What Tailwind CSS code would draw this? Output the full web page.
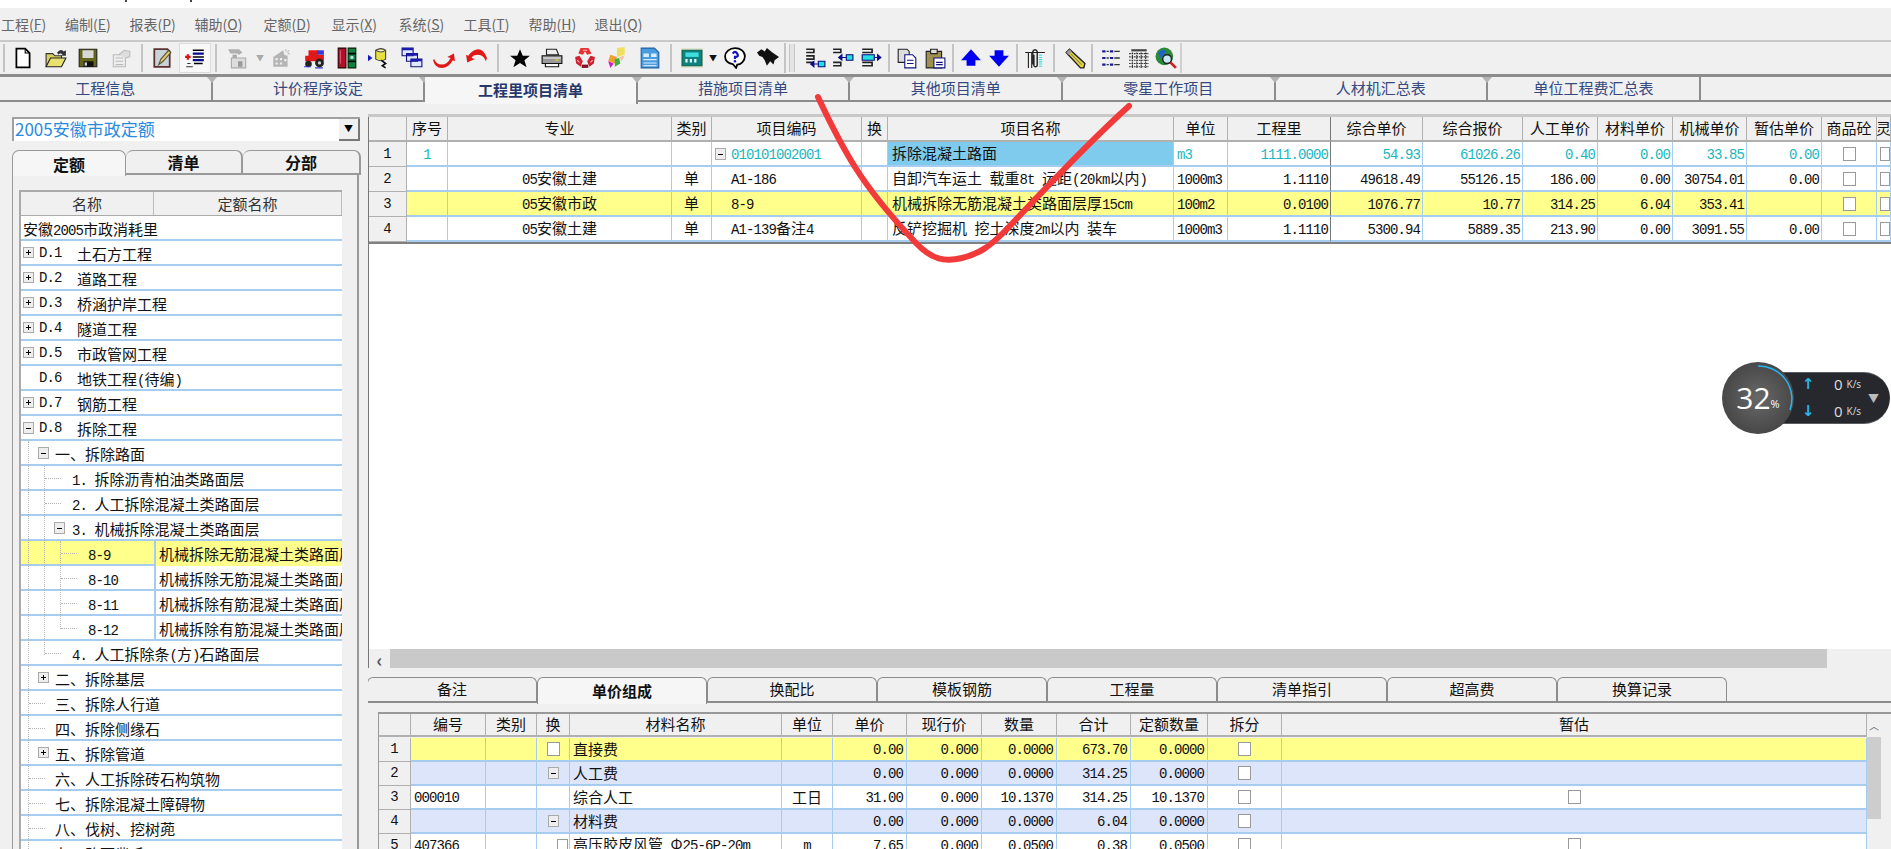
<!DOCTYPE html>
<html lang="zh-CN">
<head>
  <meta charset="UTF-8" />
  <title>工程量项目清单</title>
  <script src="https://cdn.jsdelivr.net/npm/@tailwindcss/browser@4"></script>
</head>
<body class="relative w-[1891px] h-[849px] overflow-hidden bg-[#f0f0f0] text-[15px] text-[#111] font-['Noto_Sans_CJK_SC','Liberation_Sans',sans-serif]">

  <div class="h-[8px] bg-white"></div>
  <i class="absolute left-[125px] top-0 w-[2px] h-[2px] bg-[#444]"></i>
  <i class="absolute left-[190px] top-0 w-[2px] h-[2px] bg-[#444]"></i>

  <!-- Menu -->
  <nav class="h-[32px] flex items-center pl-[1px] text-[14px] text-[#666]">
    <span class="w-[64px]">工程(<u>F</u>)</span>
    <span class="w-[64.5px]">编制(<u>E</u>)</span>
    <span class="w-[65px]">报表(<u>P</u>)</span>
    <span class="w-[69px]">辅助(<u>O</u>)</span>
    <span class="w-[68px]">定额(<u>D</u>)</span>
    <span class="w-[67px]">显示(<u>X</u>)</span>
    <span class="w-[65px]">系统(<u>S</u>)</span>
    <span class="w-[65px]">工具(<u>T</u>)</span>
    <span class="w-[66px]">帮助(<u>H</u>)</span>
    <span>退出(<u>Q</u>)</span>
  </nav>

  <!-- Toolbar -->
  <div class="h-[34px] border-t-2 border-[#c9c9c9] flex items-center [&>span]:flex [&>span]:items-center [&>span]:justify-center [&>span]:h-[30px] [&_svg]:w-[22px] [&_svg]:h-[22px]">
    <span class="w-[7px]"><i class="w-[2px] h-[28px] bg-[#c4c4c4]"></i></span>
    <span class="w-[32.5px]"><svg viewBox="0 0 20 20"><path d="M4 1.500h8l4 4v13H4z" fill="#fff" stroke="#000" stroke-width="1.600"/><path d="M12 1.500v4h4" fill="none" stroke="#000"/></svg></span>
    <span class="w-[32.5px]"><svg viewBox="0 0 20 20"><path d="M1 18V6h6l2 2h6v3" fill="#d8d060" stroke="#333"/><path d="M1 18l4-8h14l-4 8z" fill="#e8e070" stroke="#222"/><path d="M11 5q3-4 6-1l2-1v5h-5l2-1q-2-2-4 0z" fill="#333"/></svg></span>
    <span class="w-[32.5px]"><svg viewBox="0 0 20 20"><path d="M2 2h16v16H2z" fill="#66661a" stroke="#222"/><path d="M5 3h10v7H5z" fill="#d8d8d8"/><path d="M6 13h9v5H6z" fill="#111"/><path d="M7 14h2v3H7z" fill="#ddd"/></svg></span>
    <span class="w-[32.5px]"><svg viewBox="0 0 20 20"><path d="M3 7h11v11H3z" fill="#eee" stroke="#bbb"/><path d="M5 10h7M5 13h7M5 16h7" stroke="#bbb"/><path d="M8 7l5-4 5 1v5l-4 1" fill="#ddd" stroke="#bbb"/></svg></span>
    <span class="w-[9px]"><i class="w-[2px] h-[28px] bg-[#c4c4c4]"></i></span>
    <span class="w-[32.5px]"><svg viewBox="0 0 20 20"><path d="M3 2h12l2 2v14H3z" fill="#c8d4d8" stroke="#5a3030" stroke-width="1.600"/><path d="M7 16l2-5 7-8 2 2-7 8z" fill="#e8c870" stroke="#553"/></svg></span>
    <span class="w-[32.5px] bg-[#f8f8f8] border border-[#dcdcdc]"><svg viewBox="0 0 20 20"><path d="M8 3h10M8 9h10M9 15h8" stroke="#000" stroke-width="1.400"/><path d="M8 6h10M8 12h10" stroke="#0a0a90" stroke-width="2"/><path d="M1 9h5M3.500 6.500v5" stroke="#e01010" stroke-width="2"/><path d="M3 15h3M2 18h6" stroke="#333"/></svg></span>
    <span class="w-[9px]"><i class="w-[2px] h-[28px] bg-[#c4c4c4]"></i></span>
    <span class="w-[36px]"><svg viewBox="0 0 20 20"><path d="M1 2h10l3 3-3 2-2-1H6L3 6z" fill="#b0b0b0"/><path d="M5 7h4v3H5z" fill="#aaa"/><path d="M4 10h13v9H4z" fill="#ddd" stroke="#aaa"/><path d="M10 13h4v5h-4z" fill="#999"/></svg></span>
    <span class="w-[8px] text-[8px] text-[#aaa]">▼</span>
    <span class="w-[34px]"><svg viewBox="0 0 20 20"><path d="M3 9l9-6 1 4 3 1v10H3z" fill="#b4b4b4"/><path d="M5 10h2v2H5zM9 10h2v2H9zM5 14h2v2H5zM9 14h2v2H9zM13 11h2v2h-2z" fill="#eee"/><path d="M14 2l1 2M17 3l-1 2M18 6h-2" stroke="#bbb"/></svg></span>
    <span class="w-[32.5px]"><svg viewBox="0 0 20 20"><path d="M5 3h9v4h5v6H2V8h3z" fill="#e01818"/><path d="M13 3h6v4h-6z" fill="#3838d8"/><circle cx="5" cy="15.500" r="3" fill="#222"/><circle cx="15" cy="14.500" r="4" fill="#222"/><circle cx="15" cy="14.500" r="1.500" fill="#ccc"/><path d="M1 18h6M11 19h7" stroke="#3030d0"/></svg></span>
    <span class="w-[32.5px]"><svg viewBox="0 0 20 20"><path d="M2 1h7v18H2z" fill="#b01028" stroke="#200"/><path d="M4 3v12" stroke="#f05070"/><path d="M11 1h7v18h-7z" fill="#108040" stroke="#020"/><path d="M11 6h7M11 13h7" stroke="#000" stroke-width="1.500"/><circle cx="14.500" cy="9.500" r="1.500" fill="#bde"/></svg></span>
    <span class="w-[32px]"><svg viewBox="0 0 20 20"><path d="M0 7l4 3-4 3z" fill="#1818c0"/><path d="M7 3q5-3 9 0v8q-4 3-9 0z" fill="#e8e040" stroke="#444"/><path d="M7 3q5 3 9 0" fill="#fff" stroke="#444"/><path d="M12 12l4 3-3 2 3 2" fill="none" stroke="#111" stroke-width="1.500"/></svg></span>
    <span class="w-[33px]"><svg viewBox="0 0 20 20"><path d="M1 1h10v7H1zM5 6h10v7H5zM9 11h10v7H9z" fill="#e0e8ff" stroke="#101080"/><path d="M1 1h10v2H1zM5 6h10v2H5zM9 11h10v2H9z" fill="#1a1ab0"/></svg></span>
    <span class="w-[32px]"><svg viewBox="0 0 20 20"><path d="M1 11q2 5 7 5t8-6l-3-1 6-3 1 7-2-1q-4 7-10 7t-8-7z" fill="#e01818"/></svg></span>
    <span class="w-[32.5px]"><svg viewBox="0 0 20 20"><path d="M19 13q-2-6-7-6t-6 3l3 1-7 3-1-7 2 1q4-6 9-6t8 8z" fill="#e01818"/></svg></span>
    <span class="w-[11px]"><i class="w-[2px] h-[28px] bg-[#c4c4c4]"></i></span>
    <span class="w-[32.5px]"><svg viewBox="0 0 20 20"><path d="M10 2l2.500 6H19l-5 4 2 6.500-6-4-6 4L6 12 1 8h6.500z" fill="#000"/></svg></span>
    <span class="w-[32.5px]"><svg viewBox="0 0 20 20"><path d="M5 2h9l2 5H5z" fill="#eee" stroke="#222"/><path d="M1 8h18v7H1z" fill="#999" stroke="#111"/><path d="M2 10h16" stroke="#eee"/><path d="M4 15h12v3H4z" fill="#fff" stroke="#111"/><path d="M13 12h3" stroke="#dd0"/></svg></span>
    <span class="w-[32.5px]"><svg viewBox="0 0 20 20"><path d="M6 1h7l3 5-4 1-2-3-2 3-4-1z" fill="#e83030"/><path d="M1 9l4-1 3 5-2 5-4-3zM19 9l-4-1-3 5 2 5 4-3z" fill="#d02030"/><path d="M7 16h6v3H7z" fill="#801020"/><path d="M8 3h4M3 12l2 2M17 12l-2 2" stroke="#fbb"/></svg></span>
    <span class="w-[32.5px]"><svg viewBox="0 0 20 20"><path d="M10 1l7-1v7l-7 2z" fill="#f0e060"/><path d="M4 7l6 2-2 6-6-2z" fill="#f0a030"/><path d="M8 11l4-1 1 5-5 3z" fill="#40b040"/><path d="M12 9l5-1-3 5z" fill="#f8c0a0"/><path d="M2 13l5 2-3 4z" fill="#d020c0"/></svg></span>
    <span class="w-[32.5px]"><svg viewBox="0 0 20 20"><path d="M2 1h12l4 4v14H2z" fill="#4a9ce0" stroke="#2060a0"/><path d="M4 6h5v3H4zM11 6h5v3h-5zM4 11h12v1H4zM4 14h12v1H4z" fill="#d8ecff"/><path d="M4 17h12" stroke="#eef"/></svg></span>
    <span class="w-[9px]"><i class="w-[2px] h-[28px] bg-[#c4c4c4]"></i></span>
    <span class="w-[34px]"><svg viewBox="0 0 20 20"><path d="M0 1h20v18H0z" fill="#e0e0d0"/><path d="M1 3h18v14H1z" fill="#108080" stroke="#064"/><path d="M4 5h12v4H4z" fill="#40e0e0"/><path d="M4 11h2v3H4zM8 11h2v3H8zM12 11h2v3h-2z" fill="#dff"/></svg></span>
    <span class="w-[8px] text-[8px] text-[#111]">▼</span>
    <span class="w-[35px]"><svg viewBox="0 0 20 20"><path d="M10 1c5 0 9 3 9 7.500S15 16 12 16l-1 3-3-3.500C4 15 1 12.500 1 8.500S5 1 10 1z" fill="#fff" stroke="#000" stroke-width="1.600"/><path d="M8 6q2-3 4 0t-2 3v2" fill="none" stroke="#1010c0" stroke-width="2"/><circle cx="10" cy="13" r="1.100" fill="#1010c0"/></svg></span>
    <span class="w-[32px]"><svg viewBox="0 0 20 20"><path d="M0 5l4-3 3 2 2-3 5 4 6 4-4 3-1 4-3-3-3 4-2-5-2-3-3-1z" fill="#111"/></svg></span>
    <span class="w-[2px] h-[30px] bg-[#c4c4c4]"></span>
    <span class="w-[11px]"><i class="w-[6px] h-[28px] border-x border-[#c4c4c4] bg-[#e4e4e4]"></i></span>
    <span class="w-[4px]"></span>
    <span class="w-[28px]"><svg viewBox="0 0 20 20"><path d="M2 2h7v3H2M2 8h7v3H2M2 14h7" fill="none" stroke="#222" stroke-width="1.500"/><path d="M13 13h6v5h-6z" fill="#20e0e0" stroke="#0a0a80"/><path d="M13 15.500H7M9 13l-3 2.500 3 2.500z" fill="#0a0a90" stroke="#0a0a90"/></svg></span>
    <span class="w-[28px]"><svg viewBox="0 0 20 20"><path d="M1 2h7v3H1M1 14h7v3H1" fill="none" stroke="#222" stroke-width="1.500"/><path d="M13 7h6v5h-6z" fill="#20e0e0" stroke="#0a0a80"/><path d="M13 9.500H7M9 7L6 9.500 9 12z" fill="#0a0a90" stroke="#0a0a90"/></svg></span>
    <span class="w-[28px]"><svg viewBox="0 0 20 20"><path d="M2 2h9v3H2M2 14h9v3H2" fill="none" stroke="#222" stroke-width="1.500"/><path d="M2 7h11v5H2z" fill="#20e0e0" stroke="#0a0a80"/><path d="M13 9.500h6M16 7l3 2.500-3 2.500z" fill="#0a0a90" stroke="#0a0a90"/></svg></span>
    <span class="w-[8px]"><i class="w-[2px] h-[28px] bg-[#c4c4c4]"></i></span>
    <span class="w-[28px]"><svg viewBox="0 0 20 20"><path d="M2 2h8l2 2v10H2z" fill="#ddd" stroke="#222"/><path d="M8 7h7l3 3v9H8z" fill="#fff" stroke="#101080"/><path d="M10 12h6M10 15h6" stroke="#101080"/></svg></span>
    <span class="w-[28px]"><svg viewBox="0 0 20 20"><path d="M2 4h14v15H2z" fill="#a09050" stroke="#222"/><path d="M6 2h6v4H6z" fill="#ddd" stroke="#222"/><path d="M9 10h10v9H9z" fill="#fff" stroke="#101080"/><path d="M11 14h6M11 16h6" stroke="#101080"/></svg></span>
    <span class="w-[8px]"><i class="w-[2px] h-[28px] bg-[#c4c4c4]"></i></span>
    <span class="w-[28px]"><svg viewBox="0 0 20 20"><path d="M10 2l9 10h-5v5H6v-5H1z" fill="#0000f0"/></svg></span>
    <span class="w-[28px]"><svg viewBox="0 0 20 20"><path d="M10 18L1 8h5V3h8v5h5z" fill="#0000f0"/></svg></span>
    <span class="w-[8px]"><i class="w-[2px] h-[28px] bg-[#c4c4c4]"></i></span>
    <span class="w-[28px]"><svg viewBox="0 0 20 20"><path d="M1 5h18M4 5v14M7 5v14" stroke="#222" fill="none"/><path d="M15 7v12" stroke="#30e0e0" stroke-dasharray="1 1" stroke-width="3"/><path d="M8 16V4q2-3 4 0v13q-2 2-3 0V7" fill="none" stroke="#222" stroke-width="1.300"/></svg></span>
    <span class="w-[9px]"><i class="w-[2px] h-[28px] bg-[#c4c4c4]"></i></span>
    <span class="w-[3px]"></span>
    <span class="w-[28px]"><svg viewBox="0 0 20 20"><path d="M2 5l3-3 14 13-1 4-3 0z" fill="#e8d838" stroke="#222" stroke-width="1.300"/><path d="M2 5l3-3 2 2-3 3z" fill="#999"/><path d="M6 6l10 10" stroke="#887"/></svg></span>
    <span class="w-[6px]"><i class="w-[2px] h-[28px] bg-[#c4c4c4]"></i></span>
    <span class="w-[2px]"></span>
    <span class="w-[28px]"><svg viewBox="0 0 20 20"><path d="M2 3h3v2H2zM2 9h3v2H2zM2 15h3v2H2zM9 3h3v2H9zM9 9h3v2H9zM9 15h3v2H9z" fill="#1a1aa0"/><path d="M6 4h2M6 10h2M6 16h2M13 4h5M13 10h5M13 16h5" stroke="#333" stroke-width="1.300"/></svg></span>
    <span class="w-[27px]"><svg viewBox="0 0 20 20"><path d="M3 2h14v2H3z" fill="#444"/><path d="M1 6h18M1 9h18M1 12h18M1 15h18M1 18h18M4 5v14M8 5v14M12 5v14M16 5v14" stroke="#333" stroke-dasharray="1.500 .7"/></svg></span>
    <span class="w-[28px]"><svg viewBox="0 0 20 20"><circle cx="8.500" cy="8.500" r="8" fill="#2a8a3a"/><path d="M3 5q4-4 7-1l-2 3-3 3zM12 12l4-2-2 5z" fill="#2060d0"/><circle cx="11" cy="11" r="4" fill="#c8e8f8" stroke="#222" stroke-width="1.300"/><path d="M14 14l5 5" stroke="#d02020" stroke-width="2.500"/></svg></span>
    <span class="w-[2px] h-[30px] bg-[#d0d0d0]"></span>
  </div>

  <div class="h-[3px] bg-[#8c8c8c]"></div>

  <!-- Page tabs -->
  <div class="h-[25px] flex border-b-2 border-[#8c8c8c] text-[#34497f] [&>div]:w-[212.6px] [&>div]:border-r-2 [&>div]:border-[#8c8c8c] [&>div]:flex [&>div]:items-center [&>div]:justify-center [&>div]:relative [&_i]:absolute [&_i]:-right-[6px] [&_i]:top-0 [&_i]:border-x-[5px] [&_i]:border-t-[6px] [&_i]:border-x-transparent [&_i]:border-t-[#b4b4b4]">
    <div>工程信息<i></i></div>
    <div>计价程序设定<i></i></div>
    <div class="h-[27px] font-bold bg-[#f6f6f6] text-[#26386b]">工程里项目清单<i></i></div>
    <div>措施项目清单<i></i></div>
    <div>其他项目清单<i></i></div>
    <div>零星工作项目<i></i></div>
    <div>人材机汇总表<i></i></div>
    <div>单位工程费汇总表</div>
  </div>

  <div class="flex h-[748px]">
    <!-- Left panel -->
    <aside class="w-[368px] shrink-0 pl-[12px] pt-[15px] overflow-hidden">
      <div class="w-[348px] h-[24px] flex bg-white border-t-2 border-l-2 border-[#a0a0a0]">
        <div class="flex-1 pl-[1px] text-[17px] leading-[20px] text-[#2a8ae0]">2005安徽市政定额</div>
        <div class="w-[21px] flex items-center justify-center bg-[#f0f0f0] border-r-2 border-b-2 border-[#777] text-[9px] text-black">▼</div>
      </div>
      <div class="mt-[9px] w-[349px] h-[25px] flex font-bold text-[16px]">
        <div class="w-[114px] h-[26px] flex items-center justify-center bg-[#f6f6f6] border-t border-x border-[#999] rounded-t-[7px]">定额</div>
        <div class="w-[117px] flex items-center justify-center border-t border-r-2 border-b-2 border-[#999] rounded-t-[7px]">清单</div>
        <div class="w-[118px] flex items-center justify-center border-t border-r-2 border-b-2 border-[#999] rounded-t-[7px]">分部</div>
      </div>
      <div class="w-[347px] h-[700px] border-l border-r-2 border-[#999] pl-[6px] pt-[15px]">
        <div class="w-[323px] border-t-2 border-l-2 border-[#aaa]">
          <div class="h-[24px] flex text-[#333] bg-[#f0f0f0] border-b border-[#aaa]">
            <div class="w-[133px] text-center leading-[24px] border-r border-[#bbb]">名称</div>
            <div class="flex-1 text-center leading-[24px] border-r border-[#bbb]">定额名称</div>
          </div>
          <div id="tree" class="relative bg-white"></div>
        </div>
      </div>
    </aside>

    <!-- Right side -->
    <main class="flex-1 min-w-0 pt-[12px] overflow-hidden">
      <div class="border-t-[3px] border-[#c8c8c8]">
        <div class="border-l border-[#777] bg-white">
          <div id="topGrid" class="grid grid-cols-[38px_41px_224px_40px_150px_26px_286px_54px_103px_92px_100px_75px_75px_74px_75px_55px_14px] auto-rows-[25px]"></div>
          <div class="h-[2px] bg-[#808080]"></div>
          <div class="h-[405px]"></div>
          <div class="h-[19px] flex bg-[#f0f0f0]">
            <div class="w-[21px] flex items-center justify-center text-[18px] leading-none text-[#555] font-bold">‹</div>
            <div class="w-[1437px] bg-[#c9c9c9]"></div>
          </div>
        </div>
      </div>

      <!-- Lower tabs -->
      <div class="mt-[9px] -ml-[1px] h-[26px] flex border-b-2 border-[#8c8c8c] [&>div]:w-[170px] [&>div]:flex [&>div]:items-center [&>div]:justify-center [&>div]:border-t [&>div]:border-x [&>div]:border-[#8c8c8c] [&>div]:rounded-t-[6px]">
        <div>备注</div>
        <div class="h-[27px] font-bold bg-[#f6f6f6]">单价组成</div>
        <div>换配比</div>
        <div>模板钢筋</div>
        <div>工程量</div>
        <div>清单指引</div>
        <div>超高费</div>
        <div>换算记录</div>
      </div>

      <!-- Lower grid -->
      <div class="mt-[9px] ml-[10px] w-[1513px] flex border-t-2 border-l border-[#999]">
        <div id="bottomGrid" class="grid grid-cols-[32px_75px_51px_33px_212px_51px_74px_75px_75px_74px_77px_74px_585px] auto-rows-[24px] w-[1488px]"></div>
        <div class="w-[14px] flex flex-col">
          <div class="h-[23px] flex items-center justify-center text-[10px] text-[#555]">︿</div>
          <div class="h-[82px] bg-[#cdcdcd]"></div>
        </div>
      </div>
    </main>
  </div>

  <!-- Network speed widget -->
  <div class="absolute left-[1722px] top-[362px] w-[168px] h-[72px] flex items-center">
    <div class="absolute left-[36px] top-[10px] w-[132px] h-[52px] rounded-r-[26px] bg-[#26282d] border-y border-[#aaa]/40"></div>
    <div class="relative w-[72px] h-[72px] rounded-full bg-[radial-gradient(circle,#686868,#3a3a3a)] flex items-center justify-center text-white font-['Open_Sans',sans-serif]">
      <span class="text-[30px] leading-none">32</span><span class="text-[11px] mt-[12px]">%</span>
      <svg class="absolute inset-0" viewBox="0 0 72 72"><path d="M36 4A33 33 0 0 1 68 48" fill="none" stroke="#2ab4ee" stroke-width="1.500"/></svg>
    </div>
    <div class="relative ml-[8px] flex-1 flex flex-col gap-[5px] font-['Open_Sans',sans-serif] text-[#ddd]">
      <div class="flex items-center h-[22px]"><span class="w-[32px] text-[15px] font-bold text-[#2ab4ee] font-['DejaVu_Sans',sans-serif]">↑</span><span class="text-[15px]">0</span><span class="ml-[4px] text-[10px]">K/s</span></div>
      <div class="flex items-center h-[22px]"><span class="w-[32px] text-[15px] font-bold text-[#2ab4ee] font-['DejaVu_Sans',sans-serif]">↓</span><span class="text-[15px]">0</span><span class="ml-[4px] text-[10px]">K/s</span></div>
    </div>
    <span class="absolute left-[146px] top-[28px] text-[11px] text-[#bbb]">▼</span>
  </div>

  <!-- Red hand-drawn mark over the page -->
  <svg class="absolute inset-0 pointer-events-none" width="1891" height="849" viewBox="0 0 1891 849">
    <path d="M818 97C826 114 838 140 855 167S900 226 916 243S945 262 962 258S990 246 1003 233S1080 150 1129 106" fill="none" stroke="#f23a3a" stroke-width="6" stroke-linecap="round"/>
  </svg>

  <script>
    // latin and digits are half width in the original font: taller glyphs, squeezed to 7.5px
    const MONO = "font-['Liberation_Mono',monospace] text-[14px] tracking-[-0.9px]";
    function t(text) {
      const parts = String(text).replace(/[\x20-\x7e]+/g, m => `<span class="font-['Liberation_Mono',monospace] text-[14px] tracking-[-0.9px]">${m}</span>`);
      return `<span class="whitespace-pre">${parts}</span>`;
    }
    const checkbox = '<i class="block w-[13px] h-[14px] border border-[#9a9a9a] bg-white"></i>';
    const minusBox = '<i class="flex items-center justify-center w-[11px] h-[12px] border border-[#aaa] bg-[#eee]"><b class="w-[5px] h-[1px] bg-black"></b></i>';
    const plusBox = '<i class="relative flex items-center justify-center w-[11px] h-[11px] border border-[#aaa] bg-[#eee]"><b class="w-[5px] h-[1px] bg-black"></b><b class="absolute w-[1px] h-[5px] bg-black"></b></i>';

    // Tree on the left. bx = box x, x = text x, stub = dotted branch
    const treeRows = [
      { text: '安徽2005市政消耗里', x: 2 },
      { box: plusBox, bx: 2, code: 'D.1', name: '土石方工程' },
      { box: plusBox, bx: 2, code: 'D.2', name: '道路工程' },
      { box: plusBox, bx: 2, code: 'D.3', name: '桥涵护岸工程' },
      { box: plusBox, bx: 2, code: 'D.4', name: '隧道工程' },
      { box: plusBox, bx: 2, code: 'D.5', name: '市政管网工程' },
      { code: 'D.6', name: '地铁工程(待编)' },
      { box: plusBox, bx: 2, code: 'D.7', name: '钢筋工程' },
      { box: minusBox, bx: 2, code: 'D.8', name: '拆除工程' },
      { box: minusBox, bx: 17, text: '一、拆除路面', x: 34 },
      { stub: [24, 16], text: '1. 拆除沥青柏油类路面层', x: 51 },
      { stub: [24, 16], text: '2. 人工拆除混凝土类路面层', x: 51 },
      { box: minusBox, bx: 33, text: '3. 机械拆除混凝土类路面层', x: 51 },
      { stub: [40, 16], text: '8-9', x: 67, name2: '机械拆除无筋混凝土类路面层', yellow: true },
      { stub: [40, 16], text: '8-10', x: 67, name2: '机械拆除无筋混凝土类路面层' },
      { stub: [40, 16], text: '8-11', x: 67, name2: '机械拆除有筋混凝土类路面层' },
      { stub: [40, 16], text: '8-12', x: 67, name2: '机械拆除有筋混凝土类路面层' },
      { stub: [24, 16], text: '4. 人工拆除条(方)石路面层', x: 51 },
      { box: plusBox, bx: 17, text: '二、拆除基层', x: 34 },
      { stub: [8, 16], text: '三、拆除人行道', x: 34 },
      { stub: [8, 16], text: '四、拆除侧缘石', x: 34 },
      { box: plusBox, bx: 17, text: '五、拆除管道', x: 34 },
      { stub: [8, 16], text: '六、人工拆除砖石构筑物', x: 34 },
      { stub: [8, 16], text: '七、拆除混凝土障碍物', x: 34 },
      { stub: [8, 16], text: '八、伐树、挖树蔸', x: 34 },
      { stub: [8, 16], text: '九、路面凿毛', x: 34 }
    ];

    let treeHtml = '';
    treeRows.forEach(row => {
      const bg = row.yellow ? 'bg-[#ffff8c]' : '';
      let inner = '';
      if (row.stub) {
        inner += `<i class="absolute top-[12px] h-[1px] border-t border-dotted border-[#b4b4b4]" style="left:${row.stub[0]}px;width:${row.stub[1]}px"></i>`;
      }
      if (row.box) {
        inner += `<span class="absolute top-[6px]" style="left:${row.bx}px">${row.box}</span>`;
      }
      if (row.code) {
        inner += `<span class="absolute left-[18px] ${MONO}">${row.code}</span><span class="absolute left-[56px]">${t(row.name)}</span>`;
      } else {
        inner += `<span class="absolute whitespace-pre" style="left:${row.x}px">${t(row.text)}</span>`;
      }
      if (row.name2) {
        inner += `<span class="absolute left-[133px] top-0 h-[25px] w-[188px] border-l-2 border-[#a6cdf0] pl-[3px] overflow-hidden whitespace-nowrap ${bg}">${row.name2}</span>`;
      }
      treeHtml += `<div class="relative h-[25px] leading-[25px] border-b-2 border-[#a6cdf0] ${bg}">${inner}</div>`;
    });
    // dotted verticals joining the branches
    treeHtml += '<i class="absolute left-[7px] top-[225px] h-[408px] border-l border-dotted border-[#b4b4b4]"></i>';
    treeHtml += '<i class="absolute left-[23px] top-[250px] h-[189px] border-l border-dotted border-[#b4b4b4]"></i>';
    treeHtml += '<i class="absolute left-[39px] top-[325px] h-[88px] border-l border-dotted border-[#b4b4b4]"></i>';
    document.getElementById('tree').innerHTML = treeHtml;

    // Upper grid
    const headCell = 'flex items-center justify-center bg-[#f0f0f0] border-r border-b-2 border-[#b0b0b0] overflow-hidden whitespace-nowrap';
    const rowNo = "flex items-center justify-center bg-[#f0f0f0] border-r border-b border-[#b0b0b0] font-['Liberation_Mono',monospace] text-[14px]";
    const cell = 'flex items-center border-r border-b-2 border-[#a6cdf0] overflow-hidden whitespace-nowrap';
    const topHead = ['', '序号', '专业', '类别', '项目编码', '换', '项目名称', '单位', '工程里', '综合单价', '综合报价', '人工单价', '材料单价', '机械单价', '暂估单价', '商品砼', '灵'];
    const topRows = [
      { c: 'text-[#19b7bd]', v: ['1', '1', '', '', '010101002001', '', '拆除混凝土路面', 'm3', '1111.0000', '54.93', '61026.26', '0.40', '0.00', '33.85', '0.00'] },
      { c: '', v: ['2', '', '05安徽土建', '单', 'A1-186', '', '自卸汽车运土 载重8t 运距(20km以内)', '1000m3', '1.1110', '49618.49', '55126.15', '186.00', '0.00', '30754.01', '0.00'] },
      { c: '', bg: 'bg-[#ffff8c]', v: ['3', '', '05安徽市政', '单', '8-9', '', '机械拆除无筋混凝土类路面层厚15cm', '100m2', '0.0100', '1076.77', '10.77', '314.25', '6.04', '353.41', ''] },
      { c: '', v: ['4', '', '05安徽土建', '单', 'A1-139备注4', '', '反铲挖掘机 挖土深度2m以内 装车', '1000m3', '1.1110', '5300.94', '5889.35', '213.90', '0.00', '3091.55', '0.00'] }
    ];
    let topHtml = topHead.map((h, i) => `<div class="${headCell} ${i === 8 ? 'border-r-[#777]' : ''}">${h}</div>`).join('');
    topRows.forEach((row, r) => {
      const bg = row.bg || 'bg-white';
      row.v.forEach((val, i) => {
        if (i === 0) { topHtml += `<div class="${rowNo}">${val}</div>`; return; }
        let align = 'justify-end pr-[2px]';
        let content = t(val);
        let cellBg = bg;
        if (i === 1 || i === 2 || i === 3) align = 'justify-center';
        if (i === 4) {
          align = 'justify-start pl-[19px] relative';
          if (r === 0) content = `<span class="absolute left-[3px] top-[6px]">${minusBox}</span>${content}`;
        }
        if (i === 6) { align = 'justify-start pl-[4px]'; if (r === 0) cellBg = 'bg-[#7fcbee]'; }
        if (i === 7) align = 'justify-start pl-[3px]';
        const dark = i === 8 ? 'border-r-[#777]' : '';
        const text = (i === 6 && r === 0) ? '' : row.c;
        topHtml += `<div class="${cell} ${align} ${cellBg} ${text} ${dark}">${content}</div>`;
      });
      topHtml += `<div class="${cell} justify-center ${bg}">${checkbox}</div>`;
      topHtml += `<div class="${cell} justify-start pl-[3px] ${bg}">${checkbox}</div>`;
    });
    document.getElementById('topGrid').innerHTML = topHtml;

    // Lower grid
    const bottomHead = ['', '编号', '类别', '换', '材料名称', '单位', '单价', '现行价', '数量', '合计', '定额数量', '拆分', '暂估'];
    const bottomRows = [
      { bg: 'bg-[#ffff8c]', v: ['1', '', '', 'check', '直接费', '', '0.00', '0.000', '0.0000', '673.70', '0.0000'] },
      { bg: 'bg-[#dde5fb]', v: ['2', '', '', 'minus', '人工费', '', '0.00', '0.000', '0.0000', '314.25', '0.0000'] },
      { bg: 'bg-white', est: true, v: ['3', '000010', '', '', '综合人工', '工日', '31.00', '0.000', '10.1370', '314.25', '10.1370'] },
      { bg: 'bg-[#dde5fb]', v: ['4', '', '', 'minus', '材料费', '', '0.00', '0.000', '0.0000', '6.04', '0.0000'] },
      { bg: 'bg-white', est: true, v: ['5', '407366', '', 'end', '高压胶皮风管 Φ25-6P-20m', 'm', '7.65', '0.000', '0.0500', '0.38', '0.0500'] }
    ];
    let bottomHtml = bottomHead.map(h => `<div class="${headCell} h-[23px]">${h}</div>`).join('');
    bottomRows.forEach(row => {
      row.v.forEach((val, i) => {
        if (i === 0) { bottomHtml += `<div class="${rowNo}">${val}</div>`; return; }
        let align = 'justify-end pr-[3px]';
        let content = t(val);
        if (i === 1) align = 'justify-start pl-[3px]';
        if (i === 2) align = 'justify-center';
        if (i === 3) {
          align = 'justify-center';
          if (val === 'check') content = checkbox;
          else if (val === 'minus') content = minusBox;
          else if (val === 'end') { align = 'justify-end pr-[1px]'; content = '<i class="block w-[11px] h-[13px] border border-[#9a9a9a] bg-white"></i>'; }
        }
        if (i === 4) align = 'justify-start pl-[3px]';
        if (i === 5) align = 'justify-center';
        bottomHtml += `<div class="${cell} ${align} ${row.bg}">${content}</div>`;
      });
      bottomHtml += `<div class="${cell} justify-center ${row.bg}">${checkbox}</div>`;
      bottomHtml += `<div class="${cell} justify-center ${row.bg}">${row.est ? checkbox : ''}</div>`;
    });
    document.getElementById('bottomGrid').innerHTML = bottomHtml;
  </script>
</body>
</html>
